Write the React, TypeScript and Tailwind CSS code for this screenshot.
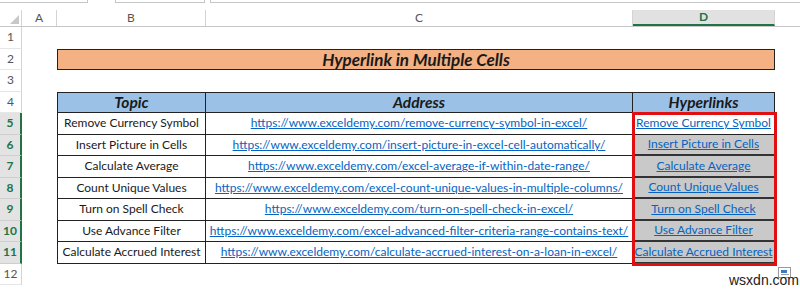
import React from 'react';

const rows = [
  {
    topic: 'Remove Currency Symbol',
    url: 'https://www.exceldemy.com/remove-currency-symbol-in-excel/',
  },
  {
    topic: 'Insert Picture in Cells',
    url: 'https://www.exceldemy.com/insert-picture-in-excel-cell-automatically/',
  },
  {
    topic: 'Calculate Average',
    url: 'https://www.exceldemy.com/excel-average-if-within-date-range/',
  },
  {
    topic: 'Count Unique Values',
    url: 'https://www.exceldemy.com/excel-count-unique-values-in-multiple-columns/',
  },
  {
    topic: 'Turn on Spell Check',
    url: 'https://www.exceldemy.com/turn-on-spell-check-in-excel/',
  },
  {
    topic: 'Use Advance Filter',
    url: 'https://www.exceldemy.com/excel-advanced-filter-criteria-range-contains-text/',
  },
  {
    topic: 'Calculate Accrued Interest',
    url: 'https://www.exceldemy.com/calculate-accrued-interest-on-a-loan-in-excel/',
  },
];

const font = { fontFamily: 'Lato, "Liberation Sans", sans-serif' };

const RowHead = ({ n, selected }: { n: number; selected?: boolean }) => (
  <div
    className={
      selected
        ? 'w-[22px] shrink-0 flex items-center justify-center bg-[#e3e3e3] text-[#217346] font-bold text-[12px] border-r-2 border-[#217346] border-b border-b-[#cfcfcf]'
        : 'w-[22px] shrink-0 flex items-center justify-center bg-white text-[#555] text-[12px] border-r border-[#d4d4d4] border-b border-b-[#e6e6e6]'
    }
  >
    {n}
  </div>
);

const App = () => {
  return (
    <div className="w-[800px] h-[290px] bg-white overflow-hidden relative text-[#1a1a1a]" style={font}>
      {/* formula bar remnants */}
      <div className="h-[10px] flex">
        <div className="w-[88px] h-[3px] border-b border-r border-[#c6c6c6]" />
        <div className="w-[27px]" />
        <div className="w-[90px] h-[3px] border-b border-x border-[#c6c6c6]" />
        <div className="w-[5px]" />
        <div className="flex-1 h-[3px] border-b border-l border-[#c6c6c6]" />
      </div>

      {/* column headers */}
      <div className="h-[17px] flex border-b border-[#c6c6c6] text-[12px] text-[#555]">
        <div className="w-[22px] shrink-0 relative border-r border-[#d4d4d4]">
          <div className="absolute right-[2px] bottom-[2px] w-0 h-0 border-l-[9px] border-l-transparent border-b-[9px] border-b-[#c8c8c8]" />
        </div>
        <div className="w-[35px] flex items-center justify-center border-r border-[#d4d4d4]">A</div>
        <div className="w-[149px] flex items-center justify-center border-r border-[#d4d4d4]">B</div>
        <div className="w-[427px] flex items-center justify-center border-r border-[#d4d4d4]">C</div>
        <div className="w-[142px] flex items-center justify-center bg-[#e1e1e1] text-[#217346] font-bold border-b-2 border-[#217346] border-r border-r-[#d4d4d4]">
          D
        </div>
        <div className="flex-1" />
      </div>

      {/* row 1 */}
      <div className="h-[21.5px] flex">
        <RowHead n={1} />
      </div>

      {/* row 2: title */}
      <div className="h-[21.5px] flex">
        <RowHead n={2} />
        <div className="w-[35px]" />
        <div className="w-[718px] border border-[#222] bg-[#f4b183] flex items-center justify-center font-bold italic text-[17px]">
          Hyperlink in Multiple Cells
        </div>
      </div>

      {/* row 3 */}
      <div className="h-[21.5px] flex">
        <RowHead n={3} />
      </div>

      {/* row 4: table header */}
      <div className="h-[21.5px] flex">
        <RowHead n={4} />
        <div className="w-[35px]" />
        <div className="w-[149px] border border-[#222] bg-[#9bc2e6] flex items-center justify-center font-bold italic text-[15.5px]">
          Topic
        </div>
        <div className="w-[427px] border-y border-r border-[#222] bg-[#9bc2e6] flex items-center justify-center font-bold italic text-[15.5px]">
          Address
        </div>
        <div className="w-[142px] border-y border-r border-[#222] bg-[#9bc2e6] flex items-center justify-center font-bold italic text-[15.5px]">
          Hyperlinks
        </div>
      </div>

      {/* rows 5-11 */}
      {rows.map((r, i) => (
        <div key={i} className="h-[21.5px] flex">
          <RowHead n={i + 5} selected />
          <div className="w-[35px]" />
          <div className="w-[149px] border-x border-b border-[#222] flex items-center justify-center text-[12px] whitespace-nowrap">
            {r.topic}
          </div>
          <div className="w-[427px] border-r border-b border-[#222] flex items-center justify-center text-[12px] whitespace-nowrap">
            <span className="text-[#0563c1] underline">{r.url}</span>
          </div>
          <div
            className={
              i === 0
                ? 'w-[142px] border-r border-b border-[#222] flex items-center justify-center text-[12px] whitespace-nowrap bg-white'
                : 'w-[142px] border-r border-b-2 border-[#333] flex items-center justify-center text-[12px] whitespace-nowrap bg-[#c9c9c9]'
            }
          >
            <span className="text-[#0563c1] underline">{r.topic}</span>
          </div>
        </div>
      ))}

      {/* row 12 */}
      <div className="h-[21.5px] flex">
        <RowHead n={12} />
      </div>

      {/* selection annotation */}
      <div className="absolute left-[632px] top-[112px] w-[145px] h-[154px] border-[3px] border-[#e01010] pointer-events-none" />

      {/* quick analysis icon */}
      <div className="absolute left-[778px] top-[267px] w-[13px] h-[11px] border border-[#9a9a9a] bg-white">
        <div className="mt-[2px] ml-[2px] w-[6px] h-[3px] bg-[#3a78c9]" />
        <div className="mt-[1px] ml-[2px] w-[8px] h-[1px] bg-[#9a9a9a]" />
      </div>

      {/* watermark */}
      <div className="absolute left-[729px] top-[270px] text-[14px] text-[#222]" style={{ fontFamily: '"Liberation Sans", sans-serif' }}>
        wsxdn.com
      </div>
    </div>
  );
};

export default App;
